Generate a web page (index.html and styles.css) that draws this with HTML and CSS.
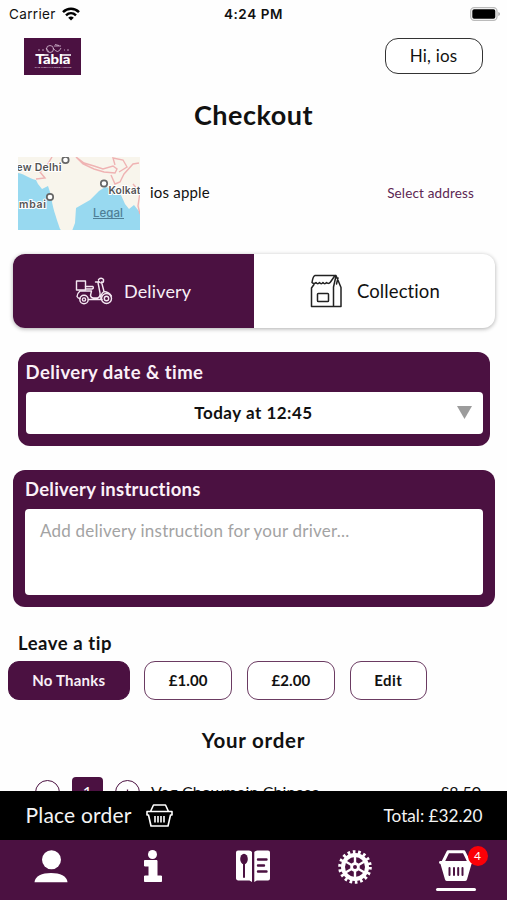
FILE: index.html
```html
<!DOCTYPE html>
<html lang="en">
<head>
<meta charset="utf-8">
<title>Checkout</title>
<link rel="stylesheet" href="styles.css">
</head>
<body>
<div class="screen">
  <main class="content">
    <div class="status">
      <div class="carrier"><span>Carrier</span>
        <svg width="18" height="14" viewBox="0 0 18 14" fill="none" stroke="#000" stroke-width="2.5"><path d="M1 5.2C5.5.7 12.500.7 17 5.200M4 8.300c2.900-2.700 7.100-2.700 10 0"/><path d="M9 13.500 6.200 10.700q2.800-2.300 5.600 0z" fill="#000" stroke="none"/></svg>
      </div>
      <span class="clock">4:24 PM</span>
      <svg class="battery" width="31" height="14" viewBox="0 0 31 14"><rect x=".7" y=".7" width="26.300" height="12.600" rx="3.500" fill="#fff" stroke="#bbb" stroke-width="1.300"/><rect x="2.300" y="2.200" width="23" height="9.600" rx="1.800"/><path d="M28.300 5v4q1.700-.5 1.700-2t-1.700-2z" fill="#aaa"/></svg>
    </div>

    <header class="header">
      <svg class="logo" width="57" height="37" viewBox="0 0 57 37">
        <rect width="57" height="37" fill="#4b1141"/>
        <g fill="none" stroke="#d9bfd6" stroke-width=".8"><circle cx="26" cy="11" r="3.500"/><path d="M29 10q5 7 8 0M30 8h7M31 6.500l4 1M22 10l3 4M14 12h2m2 0h2m20 0h1m2 0h2"/></g>
        <path d="M11.500 17h13M36 17h11" stroke="#fff" stroke-width="1.600"/>
        <text x="11.500" y="26.300" textLength="35" lengthAdjust="spacingAndGlyphs" class="logo-name">Tabla</text>
        <text x="10.500" y="30" textLength="37" lengthAdjust="spacingAndGlyphs" class="logo-tag">THE INDIAN FOOD HOUSE</text>
      </svg>
      <button class="account">Hi, ios</button>
    </header>

    <h1 class="title">Checkout</h1>

    <section class="address">
      <svg class="map" width="122" height="73" viewBox="0 0 122 73">
        <rect width="123" height="74" fill="#f8f5ec"/>
        <path d="M0 16c7 1 10 5 18 7l2 4 4 5 6-3 3 9c1 11 5 22 9 34l2 2H0z" fill="#98d9f0"/>
        <path d="M54 74l3-8 1-15 14-8 9-9 6-4 10 2 6 6 4 9 4 5 5-4 8 10v16z" fill="#98d9f0"/>
        <g fill="none" stroke="#efb3b3" stroke-width="1.400"><path d="M34 0 28 10l-6 5 5 6-9 1M58 0l8 6 10 3 9 3 10-3 4 3-2 4-11-1-10-3-11-5zM97 8l-2-7 10 2 4 7-8 5M93 18l4 9 5-2 4-8 9-10 6-1M115 27l7 8-2 14 2 8"/></g>
        <g fill="#fff" stroke="#666" stroke-width="1.700"><circle cx="47.500" cy="3" r="3.200"/><circle cx="86" cy="26.500" r="3.200"/><circle cx="32" cy="40" r="3.200"/></g>
        <g class="map-label"><text x="-1.500" y="13.500" textLength="45">ew Delhi</text><text x="90.500" y="36.500" textLength="38">Kolkata</text><text x="1" y="50.500" textLength="27">mbai</text></g>
        <text class="map-legal" x="75" y="59.500" textLength="30">Legal</text>
        <path d="M75 61.500h31" stroke="#4f7f96" stroke-width="1"/>
      </svg>
      <span class="address-name">ios apple</span>
      <a class="address-select">Select address</a>
    </section>

    <div class="tabs">
      <div class="tab tab-active">
        <svg width="38" height="28" viewBox="0 0 38 28" fill="none" stroke="#f4e8f2" stroke-width="1.400" stroke-linejoin="round" stroke-linecap="round"><rect x="1.500" y="4" width="9" height="9"/><path d="M10.500 9.500H18q1 2-1 2.500h-6.500M5 14h11.500l-1 4.500q.5 2.500 3 2.500h4q3-1 2.500-5L23 5.500M5 14q-2.500 2-3 5.500 1 2 3 2M13.500 22.500H27M26.500 5l2.500 9.500q-4 3-3 8M29 14.500q5 .5 7.500 4.500M20.500 5h4M23.500 2.500q3-2.500 5 0 .5 3-2 3.500-2 0-3-2"/><circle cx="9" cy="22.500" r="4.200"/><circle cx="9" cy="22.500" r="1.600"/><circle cx="31.500" cy="21.500" r="5"/><circle cx="31.500" cy="21.500" r="2.200"/></svg>
        <span>Delivery</span>
      </div>
      <div class="tab">
        <svg width="34" height="34" viewBox="0 0 34 34" fill="none" stroke="#222" stroke-width="1.500" stroke-linejoin="round" stroke-linecap="round"><path d="M5 1.500h20.500M5 1.500Q3 2 2 8.500q2 2 4 0 1.700 2.300 3.500 0 1.700 2.300 3.500 0 1.700 2.300 3.500 0 2 2 4-.5l4.500-6.500M4 10.500 1.500 14v18.500H31V13.500L26 1.500M26 2l-2.500 11v19.500M28 4l-1.500 6"/><rect x="7.500" y="19.500" width="11" height="8" rx=".8"/></svg>
        <span>Collection</span>
      </div>
    </div>

    <section class="card card-time">
      <h2 class="card-title">Delivery date &amp; time</h2>
      <div class="select"><span>Today at 12:45</span><svg width="15" height="13" viewBox="0 0 15 13"><path d="M0 0h15L7.500 13z" fill="#9c9c9c"/></svg></div>
    </section>

    <section class="card card-notes">
      <h2 class="card-title card-title-notes">Delivery instructions</h2>
      <div class="notes">Add delivery instruction for your driver...</div>
    </section>

    <h3 class="tip-title">Leave a tip</h3>
    <div class="tips">
      <button class="tip tip-none">No Thanks</button>
      <button class="tip">£1.00</button>
      <button class="tip">£2.00</button>
      <button class="tip tip-edit">Edit</button>
    </div>

    <h2 class="order-title">Your order</h2>
    <div class="item">
      <span class="step"><svg width="9" height="9" viewBox="0 0 9 9"><path d="M1 5.500h7" stroke="#4b1141" stroke-width="1.300"/></svg></span>
      <span class="qty">1</span>
      <span class="step"><svg width="9" height="9" viewBox="0 0 9 9"><path d="M1 5h7M4.500 1.500v7" stroke="#4b1141" stroke-width="1.300"/></svg></span>
      <span class="item-name">Veg Chowmein Chinese</span>
      <span class="item-price">£8.50</span>
    </div>
  </main>

  <div class="placebar">
    <span class="place">Place order</span>
    <svg width="27" height="23" viewBox="0 0 27 23" fill="none" stroke="#fff" stroke-width="1.600" stroke-linejoin="round"><path d="M4.500 7.500 7.500 1h12l3 6.500M1 7.500h25v3.500h-1.500l-2.500 11H5L2.500 11H1zM9 12v6.500M12 12v6.500M15 12v6.500M18 12v6.500"/></svg>
    <span class="total">Total: £32.20</span>
  </div>

  <nav class="nav">
    <a class="nav-item"><svg width="34" height="34" viewBox="0 0 34 34" fill="#fff"><circle cx="17.500" cy="9.800" r="9.500"/><path d="M.5 32.300C1 26 8 23 17 23s16 3 16.500 9.300z"/></svg></a>
    <a class="nav-item"><svg width="34" height="34" viewBox="0 0 34 34" fill="#fff"><circle cx="17.500" cy="4.500" r="4.500"/><path d="M9.500 10.500H22v15.500h4.500v5.500h-17V26H14v-10H9.500z" stroke="#fff" stroke-linejoin="round"/></svg></a>
    <a class="nav-item"><svg width="34" height="34" viewBox="0 0 34 34"><path d="M2 .5h11q2 0 3 1.500v30l-2.500-1.500H2q-2-.3-2-2v-26q0-2 2-2zM18.300 2q1-1.500 3-1.500H32q2 .2 2 2v26q0 2-2 2H20.800L18.300 32z" fill="#fff"/><ellipse cx="8" cy="9" rx="3.800" ry="5.300" fill="#4b1141"/><path d="M8 13v14" stroke="#4b1141" stroke-width="2" stroke-linecap="round"/><path d="M22 9.500h8.500M22 15.500h6M22 21.500h8.500" stroke="#4b1141" stroke-width="2.400" stroke-linecap="round"/></svg></a>
    <a class="nav-item"><svg width="34" height="34" viewBox="-17 -17 34 34" fill="none" stroke="#fff"><circle r="15" stroke-width="3.600" stroke-dasharray="2.618 2.618"/><circle r="12" stroke-width="4"/><circle r="3.400" stroke-width="2.800"/><path d="M0-4v-7M0 4v7M3.500-2l6-3.500M3.500 2l6 3.500M-3.500-2l-6-3.500M-3.500 2l-6 3.500" stroke-width="2.400"/></svg></a>
    <a class="nav-item nav-current"><svg width="34" height="34" viewBox="0 0 34 34"><path d="M4 12 9 1.800h16L30 12" fill="none" stroke="#fff" stroke-width="3" stroke-linejoin="round"/><path d="M1 11h32q1 .2 1 1.500t-1.500 1.500L28 29.500q-.5 1.500-2 1.500H8q-1.500 0-2-1.500L1.500 14Q0 13.800 0 12.500T1 11z" fill="#fff"/><path d="M10.500 18v7M15 18v7M19.200 18v7M23.500 18v7" stroke="#4b1141" stroke-width="2" stroke-linecap="round"/></svg><span class="badge">4</span></a>
  </nav>
</div>
</body>
</html>
```
FILE: styles.css
```css
* { box-sizing: border-box; }
body { margin: 0; background: #fefefe; color: #111; font-family: Lato, "Open Sans", sans-serif; font-variant-ligatures: none; }
h1, h2, h3 { margin: 0; font-weight: 700; }
svg { display: block; flex: none; }
button { font-family: inherit; padding: 0; background: #fff; color: #111; }
.screen { width: 507px; height: 900px; display: flex; flex-direction: column; overflow: hidden; }
.content { height: 791px; flex: none; overflow: hidden; display: flex; flex-direction: column; }
.content > * { flex: none; }

.status { height: 28px; display: grid; grid-template-columns: 1fr auto 1fr; align-items: center; padding: 0 6px 1px 9px; font-family: Inter, "Liberation Sans", sans-serif; font-size: 13.500px; }
.carrier { display: flex; align-items: center; gap: 6px; letter-spacing: .35px; }
.clock { font-weight: 600; letter-spacing: .6px; margin-left: -3px; }
.battery { justify-self: end; }

.header { height: 56px; padding: 10px 24.500px 0 24px; display: flex; justify-content: space-between; align-items: flex-start; }
.logo-name { font-family: Lato, sans-serif; font-weight: 900; font-size: 13px; fill: #fff; }
.logo-tag { font-family: Lato, sans-serif; font-size: 2.500px; font-weight: 700; fill: #d9bfd6; }
.account { width: 98px; height: 36px; border: 1.500px solid #333; border-radius: 13px; font-size: 17px; letter-spacing: .2px; padding-bottom: 2px; }

.title { height: 62px; line-height: 62px; text-align: center; font-size: 27px; letter-spacing: .5px; }

.address { height: 94px; margin-top: 11px; padding: 0 33px 0 18px; display: flex; align-items: flex-start; line-height: 71px; }
.address-name { margin-left: 10px; font-size: 15px; letter-spacing: .2px; }
.address-select { margin-left: auto; font-size: 13.500px; letter-spacing: .15px; color: #5c2652; line-height: 73px; }
.map-label { font-family: Inter, sans-serif; font-weight: 600; font-size: 10.500px; fill: #555; stroke: #fff; stroke-width: 2px; paint-order: stroke; }
.map-legal { font-family: Inter, sans-serif; font-size: 11.500px; font-weight: 500; fill: #4f7f96; }

.tabs { height: 74px; margin: 3px 12px 0 13px; border-radius: 12px; display: grid; grid-template-columns: 1fr 1fr; background: #fff; box-shadow: 0 1px 4px rgba(0,0,0,.32); }
.tab { display: flex; align-items: center; padding-left: 56px; gap: 13px; font-size: 18.500px; letter-spacing: .1px; }
.tab span { padding-bottom: 1px; }
.tab-active { background: #4b1141; color: #f8eff6; border-radius: 12px 0 0 12px; padding-left: 62px; gap: 11px; font-size: 18px; letter-spacing: .15px; }

.card { background: #4b1141; border-radius: 12px; }
.card-time { height: 94px; margin: 24px 17px 0 18px; padding: 0 7.500px; }
.card-notes { height: 137px; margin: 24px 12px 0 13px; padding: 0 12px; }
.card-title { height: 39.500px; line-height: 40px; color: #fbf0f8; font-size: 18.500px; letter-spacing: .45px; }
.card-title-notes { letter-spacing: .25px; height: 39px; line-height: 39px; }
.select { height: 42px; background: #fff; border-radius: 4px; display: grid; grid-template-columns: 1fr auto 1fr; align-items: center; padding: 0 11px 1px; font-size: 17px; font-weight: 700; letter-spacing: .5px; }
.select span { grid-column: 2; margin-left: -1px; }
.select svg { justify-self: end; }
.notes { height: 86px; background: #fff; border-radius: 4px; padding: 11px 15px; color: #a3a3a3; font-size: 17px; line-height: 21px; letter-spacing: .22px; }

.tip-title { height: 36px; margin: 18px 0 0 18px; line-height: 37px; font-size: 18.500px; letter-spacing: .55px; }
.tips { display: flex; gap: 14.700px; padding-left: 8px; }
.tip { width: 88px; height: 39px; border: 1.500px solid #6b3b62; border-radius: 11px; font-size: 15px; font-weight: 700; padding-bottom: 2px; letter-spacing: .1px; }
.tip-none { width: 121.500px; background: #4b1141; border-color: #4b1141; color: #f8eff6; letter-spacing: .2px; }
.tip-edit { width: 77.500px; letter-spacing: .5px; }
.order-title { height: 77px; line-height: 81px; text-align: center; font-size: 20.500px; letter-spacing: .75px; }
.item { display: flex; align-items: flex-start; padding: 0 26px 0 35px; height: 32px; font-size: 16px; line-height: 32px; }
.step { width: 25px; height: 25px; margin-top: 3px; border: 1.300px solid #4b1141; border-radius: 50%; display: grid; place-items: center; }
.qty { width: 31px; height: 32px; margin: 0 12px; border-radius: 4px; background: #4b1141; color: #fff; text-align: center; line-height: 29px; }
.item-name { margin-left: 11px; letter-spacing: .12px; line-height: 30px; }
.item-price { margin-left: auto; line-height: 30px; }

.placebar { height: 49px; flex: none; background: #000; color: #f4f4f4; display: flex; align-items: center; padding: 0 24.500px 0 25.500px; font-size: 21px; }
.place { margin-right: 14px; letter-spacing: .2px; padding-bottom: 2px; }
.total { margin-left: auto; font-size: 17.200px; padding-bottom: 1px; }
.nav { height: 60px; flex: none; background: #4b1141; display: grid; grid-template-columns: repeat(5, 1fr); }
.nav-item { position: relative; display: flex; flex-direction: column; align-items: center; padding-top: 10px; }
.nav-current::after { content: ""; width: 40px; height: 3px; margin-top: 3.500px; border-radius: 2px; background: #fff; }
.badge { position: absolute; left: 62px; top: 6px; width: 20px; height: 20px; border-radius: 50%; background: #fb0007; color: #fff; font-size: 12px; line-height: 20px; text-align: center; }
```
